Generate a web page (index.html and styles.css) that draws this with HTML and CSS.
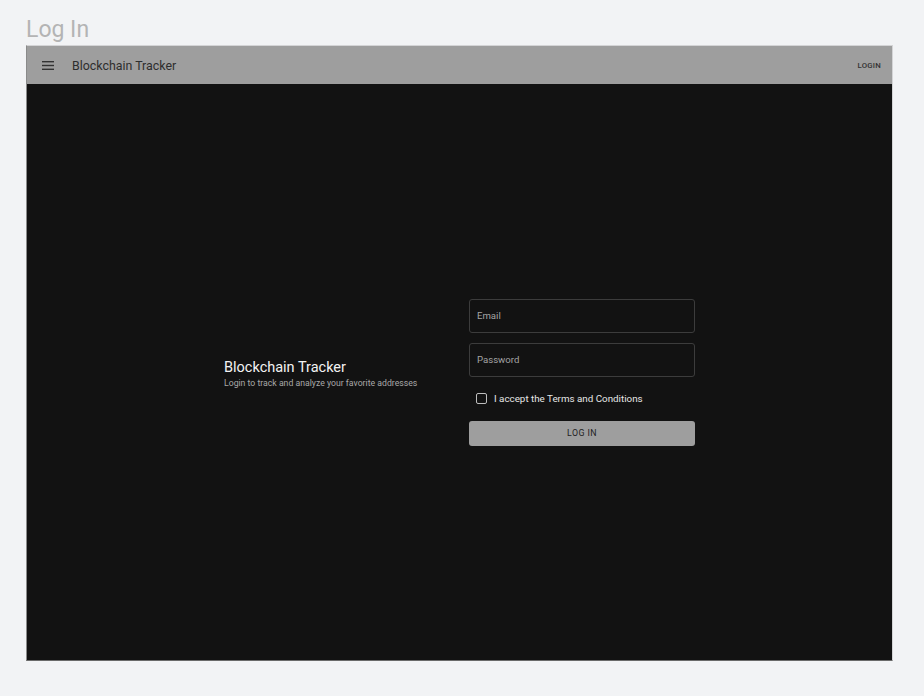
FILE: index.html
```html
<!DOCTYPE html>
<html lang="en">
<head>
<meta charset="utf-8">
<title>Log In</title>
<link rel="stylesheet" href="styles.css">
</head>
<body>
<div class="page">
  <h1 class="page-title">Log In</h1>
  <div class="frame">
    <header class="appbar">
      <svg class="menu-icon" width="12" height="9" viewBox="0 0 12 9"><rect x="0" y="0" width="12" height="1.4" fill="#333"/><rect x="0" y="3.8" width="12" height="1.4" fill="#333"/><rect x="0" y="7.6" width="12" height="1.4" fill="#333"/></svg>
      <span class="appbar-title">Blockchain Tracker</span>
      <span class="appbar-login">LOGIN</span>
    </header>
    <main class="content">
      <div class="intro">
        <div class="intro-title">Blockchain Tracker</div>
        <div class="intro-sub">Login to track and analyze your favorite addresses</div>
      </div>
      <form class="form">
        <div class="field">Email</div>
        <div class="field">Password</div>
        <label class="check-row"><span class="checkbox"></span><span>I accept the Terms and Conditions</span></label>
        <div class="btn">LOG IN</div>
      </form>
    </main>
  </div>
</div>
</body>
</html>
```
FILE: styles.css
```css
html, body {
  margin: 0;
  padding: 0;
  background: #f2f3f5;
  font-family: Roboto, "Liberation Sans", sans-serif;
}
.page {
  padding: 17px 31px 0 26px;
}
.page-title {
  margin: 0 0 2px;
  font-size: 23px;
  line-height: 26px;
  font-weight: 400;
  color: #b4b4b4;
}
.frame {
  border: 1px solid #d4d4d6;
  border-bottom-color: #6a6a6a;
  border-left-color: #8a8a8a;
  height: 614px;
  display: flex;
  flex-direction: column;
  background: #121212;
}
.appbar {
  height: 38px;
  background: #9e9e9e;
  display: flex;
  align-items: center;
  padding: 0 11px 0 15px;
  flex: none;
}
.menu-icon {
  margin-right: 18px;
}
.appbar-title {
  font-size: 12.4px;
  color: #2e2e2e;
  flex: 1;
}
.appbar-login {
  font-size: 7.8px;
  font-weight: 500;
  color: #333;
  letter-spacing: 0.2px;
}
.content {
  flex: 1;
  display: flex;
  align-items: center;
  justify-content: center;
}
.intro {
  width: 245px;
  margin-top: 4px;
}
.intro-title {
  font-size: 14.5px;
  color: #f2f2f2;
  line-height: 18px;
}
.intro-sub {
  font-size: 8.7px;
  color: #a8a8a8;
  line-height: 11px;
  margin-top: 1px;
}
.form {
  width: 226px;
  display: flex;
  flex-direction: column;
}
.field {
  height: 34px;
  box-sizing: border-box;
  border: 1px solid #3c3c3c;
  border-radius: 3px;
  padding: 0 7px;
  display: flex;
  align-items: center;
  font-size: 9.6px;
  color: #a4a4a4;
  margin-bottom: 10px;
}
.check-row {
  display: flex;
  align-items: center;
  gap: 7px;
  padding-left: 7px;
  font-size: 9.8px;
  color: #e6e6e6;
  height: 22px;
  margin-top: 1px;
  margin-bottom: 11px;
}
.checkbox {
  width: 9px;
  height: 9px;
  border: 1.5px solid #bdbdbd;
  border-radius: 2px;
}
.btn {
  height: 25px;
  background: #9e9e9e;
  border-radius: 3px;
  display: flex;
  align-items: center;
  justify-content: center;
  font-size: 8.8px;
  font-weight: 400;
  color: #1f1f1f;
  letter-spacing: 0.4px;
}
```
